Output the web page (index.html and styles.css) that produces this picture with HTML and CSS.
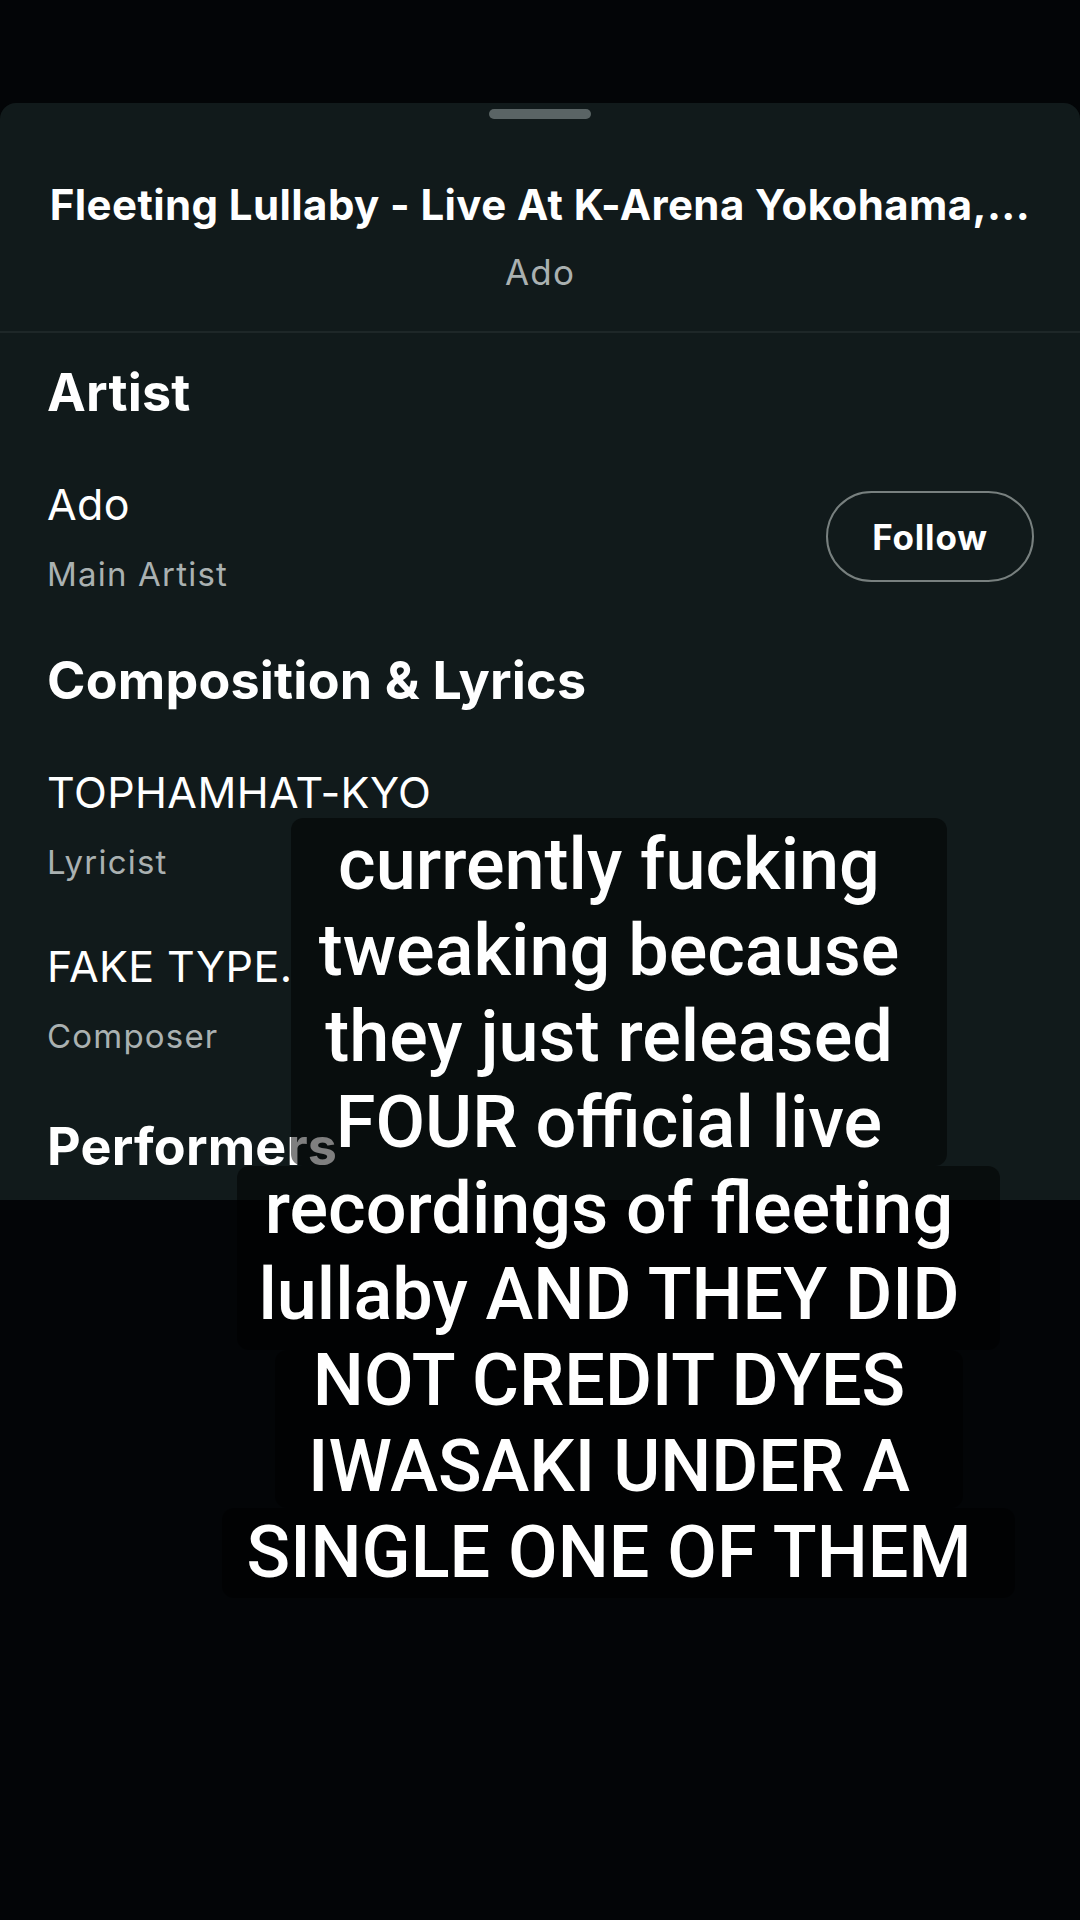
FILE: index.html
```html
<!DOCTYPE html>
<html lang="en">
<head>
<meta charset="utf-8">
<title>Credits</title>
<link rel="stylesheet" href="styles.css">
</head>
<body>
<div class="screen">
  <div class="sheet">
    <div class="handle"></div>
    <div class="track-title">Fleeting Lullaby - Live At K-Arena Yokohama,...</div>
    <div class="track-artist">Ado</div>
    <div class="divider"></div>
    <div class="credits">
      <div class="heading h-artist">Artist</div>
      <div class="artist-row">
        <div class="person">
          <div class="name">Ado</div>
          <div class="role">Main Artist</div>
        </div>
        <div class="follow">Follow</div>
      </div>
      <div class="heading h-comp">Composition &amp; Lyrics</div>
      <div class="name n-first">TOPHAMHAT-KYO</div>
      <div class="role">Lyricist</div>
      <div class="name n-next">FAKE TYPE.</div>
      <div class="role">Composer</div>
      <div class="heading h-perf">Performers</div>
    </div>
  </div>
  <div class="caption">
    <div class="cap-box box-a">
      <div class="cap-line">currently fucking</div>
      <div class="cap-line">tweaking because</div>
      <div class="cap-line">they just released</div>
      <div class="cap-line">FOUR official live</div>
    </div>
    <div class="cap-box box-b">
      <div class="cap-line">recordings of fleeting</div>
      <div class="cap-line">lullaby AND THEY DID</div>
    </div>
    <div class="cap-box box-c">
      <div class="cap-line">NOT CREDIT DYES</div>
      <div class="cap-line">IWASAKI UNDER A</div>
    </div>
    <div class="cap-box box-d">
      <div class="cap-line">SINGLE ONE OF THEM</div>
    </div>
  </div>
</div>
</body>
</html>
```
FILE: styles.css
```css
* { box-sizing: border-box; }
html, body { margin: 0; padding: 0; }
body {
  background: #030507;
  width: 1080px;
  height: 1920px;
  overflow: hidden;
  font-family: Inter, "Liberation Sans", sans-serif;
  color: #ffffff;
}
.screen {
  position: relative;
  width: 1080px;
  height: 1920px;
  padding-top: 103px;
}
.sheet {
  background: #111a1b;
  height: 1097px;
  border-radius: 16px 16px 0 0;
  overflow: hidden;
  display: flex;
  flex-direction: column;
}
.handle {
  width: 102px;
  height: 10px;
  border-radius: 5px;
  background: #5a6465;
  margin: 6px auto 0;
}
.track-title {
  font-size: 42px;
  line-height: 48px;
  font-weight: 700;
  text-align: center;
  white-space: nowrap;
  letter-spacing: 0.4px;
  margin-top: 62px;
}
.track-artist {
  font-size: 35px;
  line-height: 40px;
  text-align: center;
  color: #aab1b1;
  letter-spacing: 1.2px;
  margin-top: 23px;
}
.divider {
  height: 2px;
  background: #1e2728;
  margin-top: 39px;
}
.credits {
  padding: 0 46px 0 47px;
  display: flex;
  flex-direction: column;
}
.heading {
  font-size: 52px;
  line-height: 60px;
  font-weight: 700;
  letter-spacing: 0.2px;
}
.h-artist { margin-top: 30px; }
.h-comp { margin-top: 57px; }
.h-perf { margin-top: 61px; }
.artist-row {
  display: flex;
  align-items: center;
  justify-content: space-between;
  margin-top: 56px;
}
.name {
  font-size: 43px;
  line-height: 50px;
  letter-spacing: 0.4px;
}
.role {
  font-size: 33px;
  line-height: 40px;
  color: #aab1b1;
  letter-spacing: 1.2px;
  margin-top: 25px;
}
.n-first { margin-top: 56px; }
.n-next { margin-top: 59px; }
.follow {
  width: 208px;
  height: 91px;
  border: 2px solid #78807f;
  border-radius: 46px;
  display: flex;
  align-items: center;
  justify-content: center;
  font-size: 35px;
  font-weight: 700;
  letter-spacing: 0.8px;
}
.caption {
  position: absolute;
  top: 818px;
  left: 222px;
  width: 793px;
  display: flex;
  flex-direction: column;
  align-items: center;
  font-family: Roboto, "Liberation Sans", sans-serif;
  font-weight: 500;
  font-size: 72px;
  line-height: 86px;
  color: #ffffff;
  text-align: center;
}
.cap-box {
  background: rgba(0, 0, 0, 0.5);
  border-radius: 12px;
  display: flex;
  flex-direction: column;
  align-items: center;
  white-space: nowrap;
  padding-right: 19px;
}
.box-a { width: 656px; height: 348px; padding-top: 4px; }
.box-b { width: 763px; height: 184px; }
.box-c { width: 688px; height: 158px; }
.box-c .cap-line:first-child { margin-top: -12px; }
.box-d { width: 793px; height: 90px; padding-top: 2px; }
.cap-line { height: 86px; }
```
